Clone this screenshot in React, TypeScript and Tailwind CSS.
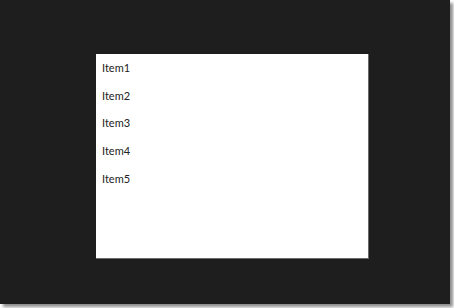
const items = ["Item1", "Item2", "Item3", "Item4", "Item5"];

export default function App() {
  return (
    <div className="w-[454px] h-[308px] bg-white">
      <div className="w-[450px] h-[304px] bg-[#1e1e1e] pt-[54px] pl-[96px] shadow-[3px_3px_3px_rgba(0,0,0,0.45)]">
        <ul className="w-[273px] h-[205px] bg-white border-r border-b border-[#6a6a6a] pl-[6px] font-['Lato',sans-serif] text-[11px] text-[#222]">
          {items.map((item) => (
            <li key={item} className="h-[27.7px] leading-[27.7px]">
              {item}
            </li>
          ))}
        </ul>
      </div>
    </div>
  );
}
